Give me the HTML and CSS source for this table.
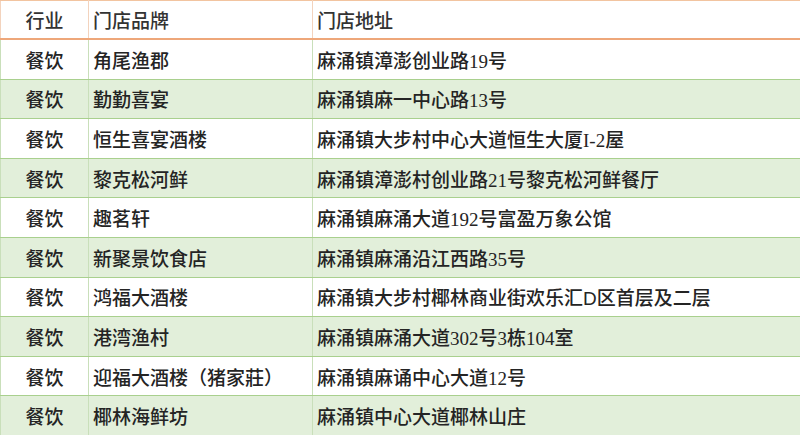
FILE: index.html
```html
<!DOCTYPE html>
<html lang="zh">
<head>
<meta charset="utf-8">
<link rel="stylesheet" href="styles.css">
</head>
<body>
<table class="stores">
  <colgroup>
    <col class="c-ind">
    <col class="c-brand">
    <col class="c-addr">
  </colgroup>
  <thead>
    <tr class="head"><th class="ind">行业</th><th>门店品牌</th><th>门店地址</th></tr>
  </thead>
  <tbody>
    <tr><td class="ind">餐饮</td><td>角尾渔郡</td><td>麻涌镇漳澎创业路19号</td></tr>
    <tr class="alt"><td class="ind">餐饮</td><td>勤勤喜宴</td><td>麻涌镇麻一中心路13号</td></tr>
    <tr><td class="ind">餐饮</td><td>恒生喜宴酒楼</td><td>麻涌镇大步村中心大道恒生大厦I-2屋</td></tr>
    <tr class="alt"><td class="ind">餐饮</td><td>黎克松河鲜</td><td>麻涌镇漳澎村创业路21号黎克松河鲜餐厅</td></tr>
    <tr><td class="ind">餐饮</td><td>趣茗轩</td><td>麻涌镇麻涌大道192号富盈万象公馆</td></tr>
    <tr class="alt"><td class="ind">餐饮</td><td>新聚景饮食店</td><td>麻涌镇麻涌沿江西路35号</td></tr>
    <tr><td class="ind">餐饮</td><td>鸿福大酒楼</td><td>麻涌镇大步村椰林商业街欢乐汇<span class="sans">D</span>区首层及二层</td></tr>
    <tr class="alt"><td class="ind">餐饮</td><td>港湾渔村</td><td>麻涌镇麻涌大道302号3栋104室</td></tr>
    <tr><td class="ind">餐饮</td><td>迎福大酒楼（猪家莊）</td><td>麻涌镇麻诵中心大道12号</td></tr>
    <tr class="alt"><td class="ind">餐饮</td><td>椰林海鲜坊</td><td>麻涌镇中心大道椰林山庄</td></tr>
  </tbody>
</table>
</body>
</html>
```
FILE: styles.css
```css
html, body {
  margin: 0;
  padding: 0;
  background: #ffffff;
  overflow: hidden;
}
body {
  width: 800px;
  height: 435px;
  font-family: "Liberation Serif", "Noto Sans CJK SC", serif;
  font-size: 19px;
  color: #242424;
}
.stores {
  width: 800px;
  border-collapse: collapse;
  table-layout: fixed;
}
.c-ind { width: 88px; }
.c-brand { width: 224px; }
.c-addr { width: 488px; }
.stores th, .stores td {
  padding: 0 0 0 4px;
  text-align: left;
  vertical-align: middle;
  font-weight: 500;
  white-space: nowrap;
  border-left: 1px solid #c9dfba;
  border-right: 1px solid #c9dfba;
}
.stores th {
  height: 37px;
  color: #333333;
  border-top: 1px solid #f2c4a0;
  border-bottom: 2px solid #eea77a;
  border-left-color: #f3d3bd;
  border-right-color: #f3d3bd;
}
.stores td {
  height: 38.6px;
  border-bottom: 1px solid #a9d08e;
}
.stores .ind {
  text-align: center;
  padding: 0;
}
.stores tr.alt td {
  background: #e2efda;
}
.sans {
  font-family: "Liberation Sans", sans-serif;
  font-weight: 400;
}
```
